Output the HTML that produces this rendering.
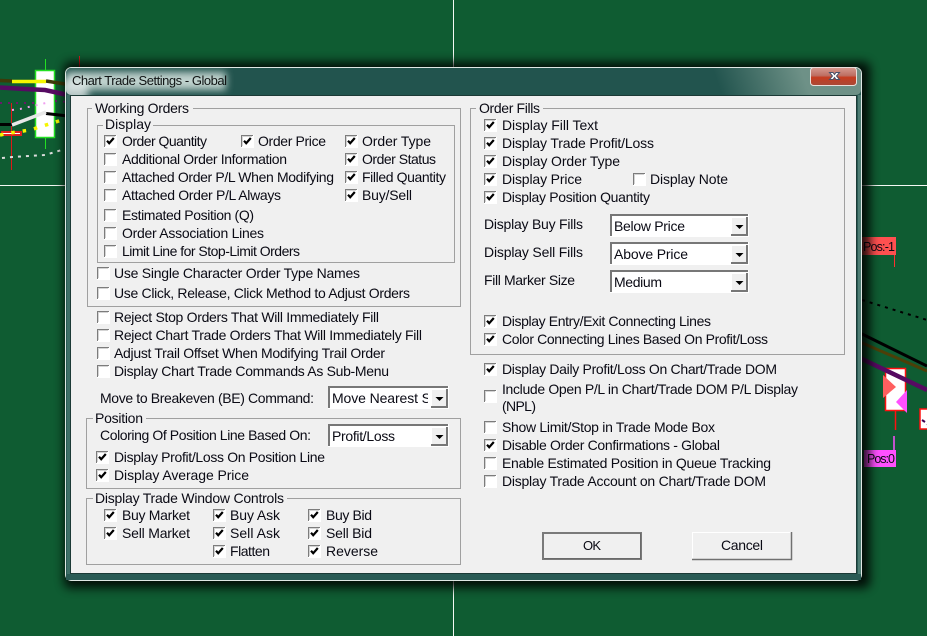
<!DOCTYPE html>
<html><head><meta charset="utf-8"><title>Chart Trade Settings - Global</title>
<style>
html,body{margin:0;padding:0;background:#0f5c32;width:927px;height:636px;overflow:hidden}
svg{display:block}
text{font-family:"Liberation Sans",sans-serif;font-size:14px;fill:#0a0a14}
</style></head><body>
<svg width="927" height="636" viewBox="0 0 927 636" xmlns="http://www.w3.org/2000/svg">
<defs>
<linearGradient id="tb" gradientUnits="userSpaceOnUse" x1="722" y1="95" x2="800" y2="67"><stop offset="0" stop-color="#22544e"/><stop offset="1" stop-color="#6e9187"/></linearGradient>
<linearGradient id="cl" x1="0" y1="0" x2="0" y2="1"><stop offset="0" stop-color="#d69a90"/><stop offset=".45" stop-color="#bd6f63"/><stop offset=".55" stop-color="#c63c20"/><stop offset="1" stop-color="#a84a38"/></linearGradient>
<filter id="b6" x="-20%" y="-20%" width="140%" height="140%"><feGaussianBlur stdDeviation="5"/></filter>
<filter id="b4" x="-30%" y="-100%" width="160%" height="300%"><feGaussianBlur stdDeviation="4"/></filter>
<clipPath id="tc"><rect x="66" y="68" width="795" height="27" rx="5"/></clipPath>
<g id="u"><rect x="0" y="0" width="13" height="13" fill="#fff"/><path d="M.5 12V.5H12" fill="none" stroke="#7c7c7c"/><path d="M1.500 11V1.500H11" fill="none" stroke="#d4d4d4"/></g>
<g id="c"><use href="#u"/><path d="M3 5.800L5.200 8.200L9.800 3" fill="none" stroke="#000" stroke-width="2.200"/></g>
<g id="ar"><rect x="0" y="0" width="17" height="19" fill="#f0f0f0"/><path d="M.5 18V.5H16" fill="none" stroke="#fff"/><path d="M0 18H16V0" fill="none" stroke="#777" stroke-width="2"/><path d="M4.500 8h8l-4 4z" fill="#000"/></g>
</defs>

<rect width="927" height="636" fill="#0f5c32"/>
<!-- chart -->
<path d="M453.500 0V70M453.500 578V636M0 185.500H70M858 185.500H927" stroke="#f4f8f4" stroke-width="1"/>
<path d="M45.500 59V71M45.500 137V149" stroke="#22e022" stroke-width="1"/>
<rect x="35.500" y="70.500" width="19" height="67" fill="#fff" stroke="#22e022" stroke-width="1.500"/>
<path d="M79.500 56V70M11.500 103V170" stroke="#e01818"/>
<rect x="2" y="132" width="19" height="3" fill="#fff" stroke="#e02020" stroke-width="2"/>
<path d="M0 80.500L12 81M46 81L65 84" stroke="#3d3a08" stroke-width="3.500" fill="none"/>
<path d="M12 81.500H46" stroke="#f5f500" stroke-width="3.500"/>
<path d="M0 87.500L25 89L45 90L68 95" stroke="#560a62" stroke-width="4.500" fill="none"/>
<path d="M0 103L36 103M55 101L68 102" stroke="#6a1a6a" stroke-width="2" stroke-dasharray="2 6" fill="none"/>
<path d="M12 110L20 109L50 102" stroke="#f0a0f0" stroke-width="2" stroke-dasharray="2 6" fill="none"/>
<path d="M0 124.500H12M46 113.500L68 116" stroke="#000" stroke-width="3" fill="none"/>
<path d="M12 125L46 112" stroke="#e8e8e8" stroke-width="3.500"/>
<path d="M0 135L10 133L30 130L62 120" stroke="#f5f500" stroke-width="3.500" stroke-dasharray="3.500 8" fill="none"/>
<path d="M2 158L12 157L45 155L65 149" stroke="#ddd" stroke-width="2" stroke-dasharray="3 5" fill="none"/>
<!-- right chart -->
<rect x="862" y="237" width="34" height="18" fill="#ff5050"/>
<text x="863" y="251" textLength="32" lengthAdjust="spacing" style="font-size:12.500px">Pos:-1</text>
<path d="M894.500 255V267" stroke="#ff3030"/>
<path d="M862 300L927 320" stroke="#000" stroke-width="2" stroke-dasharray="3 5"/>
<rect x="885.500" y="368.500" width="20" height="42" fill="#fff" stroke="#ff1010" stroke-width="1.500"/>
<path d="M860 333L927 366" stroke="#000" stroke-width="3"/>
<path d="M860 342L927 371" stroke="#4d3f08" stroke-width="3"/>
<path d="M860 358L927 390" stroke="#560a62" stroke-width="4.500"/>
<path d="M895.500 411V430" stroke="#ff1010" stroke-width="1.500"/>
<path d="M883 375V398L896 387z" fill="#ff5f5f"/>
<path d="M907 390V413L896 402z" fill="#ff50ff"/>
<path d="M894 436V450" stroke="#ff50ff" stroke-width="1.500"/>
<rect x="920" y="409" width="10" height="20" fill="#fff" stroke="#ff1010" stroke-width="1.500"/>
<path d="M922 420l3 2M927 424l2 1" stroke="#400050" stroke-width="2"/>
<rect x="864" y="450" width="32" height="17" fill="#ff50ff"/>
<text x="867" y="463" textLength="28" lengthAdjust="spacing" style="font-size:12.500px">Pos:0</text>

<!-- shadow -->
<rect x="64" y="62" width="806" height="526" rx="6" fill="#000" opacity=".85" filter="url(#b6)"/>
<!-- frame -->
<rect x="65.500" y="67.500" width="796" height="513" rx="6" fill="#2a5b55" stroke="#dfe8e4"/>
<g clip-path="url(#tc)">
<rect x="66" y="68" width="795" height="27" fill="url(#tb)"/>
<rect x="66" y="72" width="160" height="18" fill="#dce8e4" opacity=".85" filter="url(#b4)"/>
<rect x="60" y="80" width="28" height="22" fill="#e8eeee" opacity=".75" filter="url(#b4)"/>
</g>
<rect x="67" y="95" width="3" height="480" fill="#3f7068"/>
<rect x="858" y="95" width="3" height="480" fill="#4f7d74"/>
<rect x="66" y="574" width="795" height="6" fill="#2a5b55"/>
<!-- close -->
<rect x="810.500" y="67.500" width="46" height="18" rx="3" fill="url(#cl)" stroke="#e8e0dc"/>
<path d="M829.500 72.500h3.500l1.500 2 1.500-2h3.500l-3 3.500 3 3.500h-3.500l-1.500-2-1.500 2h-3.500l3-3.500z" fill="#fff" stroke="#48506a" stroke-width="1"/>
<text x="72" y="85" textLength="155" lengthAdjust="spacing" style="font-size:13px;fill:#101414">Chart Trade Settings - Global</text>
<!-- client -->
<rect x="70.500" y="95.500" width="786" height="478" fill="#f0f0f0" stroke="#1c3a36"/>

<!-- groups -->
<g fill="none" stroke="#a0a0a0">
<rect x="87.500" y="108.500" width="373" height="198"/>
<rect x="97.500" y="125.500" width="357" height="137"/>
<rect x="470.500" y="108.500" width="374" height="246"/>
<rect x="86.500" y="418.500" width="374" height="70"/>
<rect x="86.500" y="498.500" width="374" height="66"/>
</g>
<g fill="#f0f0f0">
<rect x="92" y="104" width="101" height="10"/>
<rect x="103" y="120" width="50" height="10"/>
<rect x="476" y="104" width="67" height="10"/>
<rect x="93" y="414" width="53" height="10"/>
<rect x="93" y="494" width="194" height="10"/>
</g>
<text x="95" y="113" textLength="94">Working Orders</text>
<text x="105" y="129" textLength="46">Display</text>
<text x="479" y="113" textLength="61">Order Fills</text>
<text x="95" y="423" textLength="48">Position</text>
<text x="95" y="503" textLength="189">Display Trade Window Controls</text>

<!-- left checks -->
<use href="#c" x="104" y="135"/><text x="122" y="146" textLength="85">Order Quantity</text>
<use href="#c" x="241" y="135"/><text x="258" y="146" textLength="68">Order Price</text>
<use href="#c" x="345" y="135"/><text x="362" y="146" textLength="69">Order Type</text>
<use href="#u" x="104" y="153"/><text x="122" y="164" textLength="165">Additional Order Information</text>
<use href="#c" x="345" y="153"/><text x="362" y="164" textLength="74">Order Status</text>
<use href="#u" x="104" y="171"/><text x="122" y="182" textLength="212">Attached Order P/L When Modifying</text>
<use href="#c" x="345" y="171"/><text x="362" y="182" textLength="84">Filled Quantity</text>
<use href="#u" x="104" y="189"/><text x="122" y="200" textLength="159">Attached Order P/L Always</text>
<use href="#c" x="345" y="189"/><text x="362" y="200" textLength="50">Buy/Sell</text>
<use href="#u" x="104" y="209"/><text x="122" y="220" textLength="132">Estimated Position (Q)</text>
<use href="#u" x="104" y="227"/><text x="122" y="238" textLength="142">Order Association Lines</text>
<use href="#u" x="104" y="245"/><text x="122" y="256" textLength="178">Limit Line for Stop-Limit Orders</text>
<use href="#u" x="97" y="267"/><text x="114" y="278" textLength="246">Use Single Character Order Type Names</text>
<use href="#u" x="97" y="287"/><text x="114" y="298" textLength="296">Use Click, Release, Click Method to Adjust Orders</text>
<use href="#u" x="97" y="311"/><text x="114" y="322" textLength="265">Reject Stop Orders That Will Immediately Fill</text>
<use href="#u" x="97" y="329"/><text x="114" y="340" textLength="308">Reject Chart Trade Orders That Will Immediately Fill</text>
<use href="#u" x="97" y="347"/><text x="114" y="358" textLength="271">Adjust Trail Offset When Modifying Trail Order</text>
<use href="#u" x="97" y="365"/><text x="114" y="376" textLength="275">Display Chart Trade Commands As Sub-Menu</text>
<text x="100" y="403" textLength="214">Move to Breakeven (BE) Command:</text>
<text x="100" y="440" textLength="211">Coloring Of Position Line Based On:</text>
<use href="#c" x="96" y="451"/><text x="114" y="462" textLength="211">Display Profit/Loss On Position Line</text>
<use href="#c" x="96" y="469"/><text x="114" y="480" textLength="135">Display Average Price</text>
<use href="#c" x="104" y="509"/><text x="122" y="520" textLength="68">Buy Market</text>
<use href="#c" x="213" y="509"/><text x="230" y="520" textLength="50">Buy Ask</text>
<use href="#c" x="308" y="509"/><text x="326" y="520" textLength="46">Buy Bid</text>
<use href="#c" x="104" y="527"/><text x="122" y="538" textLength="68">Sell Market</text>
<use href="#c" x="213" y="527"/><text x="230" y="538" textLength="50">Sell Ask</text>
<use href="#c" x="308" y="527"/><text x="326" y="538" textLength="46">Sell Bid</text>
<use href="#c" x="213" y="545"/><text x="230" y="556" textLength="40">Flatten</text>
<use href="#c" x="308" y="545"/><text x="326" y="556" textLength="52">Reverse</text>

<!-- right checks -->
<use href="#c" x="484" y="119"/><text x="502" y="130" textLength="96">Display Fill Text</text>
<use href="#c" x="484" y="137"/><text x="502" y="148" textLength="152">Display Trade Profit/Loss</text>
<use href="#c" x="484" y="155"/><text x="502" y="166" textLength="118">Display Order Type</text>
<use href="#c" x="484" y="173"/><text x="502" y="184" textLength="80">Display Price</text>
<use href="#u" x="633" y="173"/><text x="650" y="184" textLength="78">Display Note</text>
<use href="#c" x="484" y="191"/><text x="502" y="202" textLength="148">Display Position Quantity</text>
<text x="484" y="229" textLength="99">Display Buy Fills</text>
<text x="484" y="257" textLength="99">Display Sell Fills</text>
<text x="484" y="285" textLength="91">Fill Marker Size</text>
<use href="#c" x="484" y="315"/><text x="502" y="326" textLength="209">Display Entry/Exit Connecting Lines</text>
<use href="#c" x="484" y="333"/><text x="502" y="344" textLength="266">Color Connecting Lines Based On Profit/Loss</text>
<use href="#c" x="484" y="363"/><text x="502" y="374" textLength="275">Display Daily Profit/Loss On Chart/Trade DOM</text>
<use href="#u" x="484" y="390"/><text x="502" y="394" textLength="296">Include Open P/L in Chart/Trade DOM P/L Display</text>
<text x="502" y="411" textLength="34">(NPL)</text>
<use href="#u" x="484" y="421"/><text x="502" y="432" textLength="213">Show Limit/Stop in Trade Mode Box</text>
<use href="#c" x="484" y="439"/><text x="502" y="450" textLength="218">Disable Order Confirmations - Global</text>
<use href="#u" x="484" y="457"/><text x="502" y="468" textLength="269">Enable Estimated Position in Queue Tracking</text>
<use href="#u" x="484" y="475"/><text x="502" y="486" textLength="264">Display Trade Account on Chart/Trade DOM</text>

<!-- combos -->
<g fill="#fff">
<rect x="610" y="214" width="139" height="23"/>
<rect x="610" y="242" width="139" height="23"/>
<rect x="610" y="270" width="139" height="23"/>
<rect x="328" y="386" width="121" height="23"/>
<rect x="328" y="424" width="121" height="23"/>
</g>
<g fill="none" stroke="#777" stroke-width="2">
<path d="M611 236V215H748"/>
<path d="M611 264V243H748"/>
<path d="M611 292V271H748"/>
<path d="M329 408V387H448"/>
<path d="M329 446V425H448"/>
</g>
<use href="#ar" x="731" y="217"/><use href="#ar" x="731" y="245"/><use href="#ar" x="731" y="273"/>
<use href="#ar" x="431" y="389"/><use href="#ar" x="431" y="427"/>
<text x="614" y="231" textLength="71">Below Price</text>
<text x="614" y="259" textLength="74">Above Price</text>
<text x="614" y="287" textLength="48">Medium</text>
<text x="332" y="403" textLength="99">Move Nearest S</text>
<rect x="428" y="388" width="3" height="20" fill="#fff"/>
<text x="332" y="441" textLength="63">Profit/Loss</text>

<!-- buttons -->
<rect x="543" y="533" width="98" height="26" fill="#f0f0f0" stroke="#7a7a7a" stroke-width="2"/>
<path d="M640.500 533V558.500H544" fill="none" stroke="#6a6a6a" stroke-width="1"/>
<text x="583" y="550" textLength="18" style="font-size:13px">OK</text>
<rect x="692" y="532" width="100" height="28" fill="#f0f0f0"/>
<path d="M692.500 559V532.500H791" fill="none" stroke="#fff"/>
<path d="M692 559.500H791.500V532" fill="none" stroke="#707070" stroke-width="1.500"/>
<text x="721" y="550" textLength="42">Cancel</text>
</svg>
</body></html>
